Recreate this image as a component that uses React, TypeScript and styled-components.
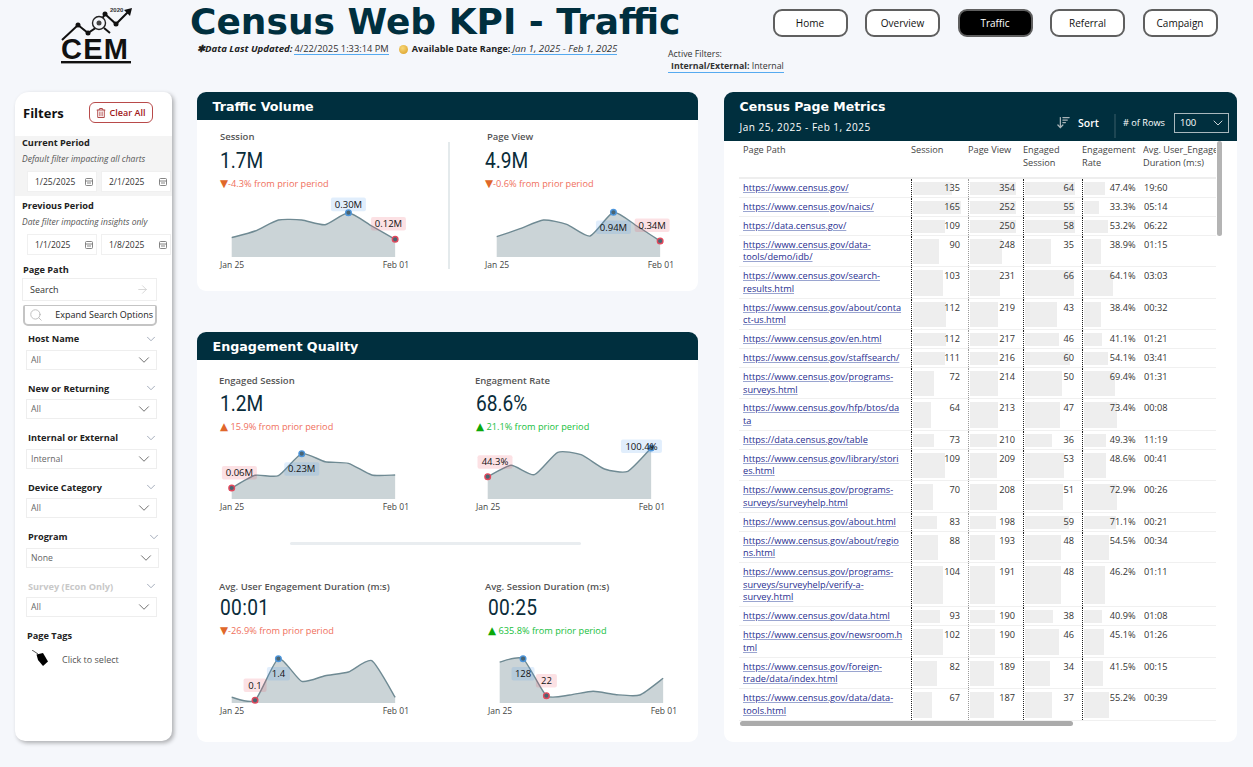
// External Imports
import styled, { createGlobalStyle } from 'styled-components'
import { ArrowDownWideNarrow, ArrowRight, ChevronDown, Search } from 'lucide-react'
import { FaRegTrashAlt } from 'react-icons/fa'

// Types

interface IChart {
  heights: number[]
  low: number
  high: number
  lowText: string
  highText: string
  lowOffset: [number, number]
  highOffset: [number, number]
}

interface IKpi {
  label: string
  value: string
  delta: string
  up?: boolean
  good?: boolean
  chart: IChart
  labelIndent?: number
  valueGap: number
  chartGap: number
  mono?: boolean
}

// Data

const sessionKpi: IKpi = {
  label: 'Session', value: '1.7M', delta: '-4.3% from prior period', valueGap: 3, chartGap: 6,
  chart: {
    heights: [19.3, 26, 37, 37, 32.3, 44.3, 31, 17.7], low: 7, high: 5,
    lowText: '0.12M', highText: '0.30M', lowOffset: [-6.7, -15.5], highOffset: [0, -8.3],
  },
}

const pageViewKpi: IKpi = {
  label: 'Page View', value: '4.9M', delta: '-0.6% from prior period', valueGap: 3, chartGap: 6, labelIndent: 2,
  chart: {
    heights: [20.3, 28.3, 37, 32.7, 21, 44.7, 31, 16], low: 7, high: 5,
    lowText: '0.34M', highText: '0.94M', lowOffset: [-8, -15.7], highOffset: [0, 15],
  },
}

const engagedKpi: IKpi = {
  label: 'Engaged Session', value: '1.2M', delta: '15.9% from prior period', up: true, valueGap: 2, chartGap: 5, labelIndent: -1,
  chart: {
    heights: [11, 23.7, 23.3, 45.3, 37.3, 35.7, 24, 24], low: 0, high: 3,
    lowText: '0.06M', highText: '0.23M', lowOffset: [7.7, -15.3], highOffset: [0, 15.3],
  },
}

const rateKpi: IKpi = {
  label: 'Engagment Rate', value: '68.6%', delta: '21.1% from prior period', up: true, good: true, valueGap: 2, chartGap: 5, labelIndent: -1,
  chart: {
    heights: [22.3, 33.7, 24.3, 46.7, 44.3, 30, 27.7, 51], low: 0, high: 7,
    lowText: '44.3%', highText: '100.4%', lowOffset: [7.3, -14.7], highOffset: [-9.7, -1.7],
  },
}

const userDurationKpi: IKpi = {
  label: 'Avg. User Engagement Duration (m:s)', value: '00:01', delta: '-26.9% from prior period', valueGap: 0, chartGap: 5, labelIndent: -1, mono: true,
  chart: {
    heights: [5.7, 2.7, 44.3, 21.7, 27.3, 31, 42.3, 5.7], low: 1, high: 2,
    lowText: '0.1', highText: '1.4', lowOffset: [0, -15], highOffset: [0, 15],
  },
}

const sessionDurationKpi: IKpi = {
  label: 'Avg. Session Duration (m:s)', value: '00:25', delta: '635.8% from prior period', up: true, good: true, valueGap: 0, chartGap: 5, labelIndent: -3, mono: true,
  chart: {
    heights: [41, 44.3, 7.3, 8, 11.7, 8.3, 8, 24.7], low: 2, high: 1,
    lowText: '22', highText: '128', lowOffset: [0, -15], highOffset: [0, 15],
  },
}

// a "|" marks where the path wraps in the column
const pages: [string, number, number, number, string, string][] = [
  ['https://www.census.gov/', 135, 354, 64, '47.4%', '19:60'],
  ['https://www.census.gov/naics/', 165, 252, 55, '33.3%', '05:14'],
  ['https://data.census.gov/', 109, 250, 58, '53.2%', '06:22'],
  ['https://www.census.gov/data-|tools/demo/idb/', 90, 248, 35, '38.9%', '01:15'],
  ['https://www.census.gov/search-|results.html', 103, 231, 66, '64.1%', '03:03'],
  ['https://www.census.gov/about/conta|ct-us.html', 112, 219, 43, '38.4%', '00:32'],
  ['https://www.census.gov/en.html', 112, 217, 46, '41.1%', '01:21'],
  ['https://www.census.gov/staffsearch/', 111, 216, 60, '54.1%', '03:41'],
  ['https://www.census.gov/programs-|surveys.html', 72, 214, 50, '69.4%', '01:31'],
  ['https://www.census.gov/hfp/btos/da|ta', 64, 213, 47, '73.4%', '00:08'],
  ['https://data.census.gov/table', 73, 210, 36, '49.3%', '11:19'],
  ['https://www.census.gov/library/stori|es.html', 109, 209, 53, '48.6%', '00:41'],
  ['https://www.census.gov/programs-|surveys/surveyhelp.html', 70, 208, 51, '72.9%', '00:26'],
  ['https://www.census.gov/about.html', 83, 198, 59, '71.1%', '00:21'],
  ['https://www.census.gov/about/regio|ns.html', 88, 193, 48, '54.5%', '00:34'],
  ['https://www.census.gov/programs-|surveys/surveyhelp/verify-a-|survey.html', 104, 191, 48, '46.2%', '01:11'],
  ['https://www.census.gov/data.html', 93, 190, 38, '40.9%', '01:08'],
  ['https://www.census.gov/newsroom.h|tml', 102, 190, 46, '45.1%', '01:26'],
  ['https://www.census.gov/foreign-|trade/data/index.html', 82, 189, 34, '41.5%', '00:15'],
  ['https://www.census.gov/data/data-|tools.html', 67, 187, 37, '55.2%', '00:39'],
]

const filters = [
  { label: 'Host Name', value: 'All' },
  { label: 'New or Returning', value: 'All' },
  { label: 'Internal or External', value: 'Internal' },
  { label: 'Device Category', value: 'All' },
  { label: 'Program', value: 'None', wide: true },
  { label: 'Survey (Econ Only)', value: 'All', muted: true },
]

const navItems = ['Home', 'Overview', 'Traffic', 'Referral', 'Campaign']

// Global

const ui = `'Open Sans', 'Noto Sans', sans-serif`
const heading = `'DejaVu Sans', Verdana, sans-serif`
const navy = '#002f3e'

const GlobalStyle = createGlobalStyle`
  html, body {
    margin: 0;
    background: #f5f7fb;
    font-family: ${ui};
    color: #222;
  }
  * { box-sizing: border-box; }
`

// Header Styles

const Page = styled.div`
  width: 1253px;
  height: 767px;
  overflow: hidden;
  background: #f5f7fb;
`

const Header = styled.header`
  display: flex;
  height: 92px;
`

const LogoBox = styled.div`
  width: 190px;
  padding: 3px 0 0 58px;
`

const TitleBlock = styled.div`
  width: 478px;
`

const Title = styled.h1`
  margin: 0;
  height: 41px;
  font: bold 36px/44px ${heading};
  color: ${navy};
  white-space: nowrap;
`

const Meta = styled.div`
  display: flex;
  align-items: center;
  margin: 1px 0 0 7px;
  line-height: 14px;
  white-space: nowrap;
`

const MetaLabel = styled.span<{ $italic?: boolean }>`
  font-weight: 700;
  font-size: ${p => (p.$italic ? 9.6 : 9.1)}px;
  font-style: ${p => (p.$italic ? 'italic' : 'normal')};
  margin-right: 2px;
`

const MetaValue = styled.span<{ $italic?: boolean }>`
  font-size: ${p => (p.$italic ? 9.7 : 9.3)}px;
  font-style: ${p => (p.$italic ? 'italic' : 'normal')};
  color: #333;
  border-bottom: 1px solid #55aaf0;
  line-height: 11px;
`

const Coin = styled.span`
  width: 9px;
  height: 9px;
  margin: 0 4px 0 10px;
  border-radius: 50%;
  background: radial-gradient(circle at 40% 35%, #f8d878, #d89a20);
`

const RightBlock = styled.div`
  flex: 1;
`

const Nav = styled.nav`
  display: flex;
  margin: 9px 0 0 104.5px;
`

const NavButton = styled.div<{ $active?: boolean }>`
  width: 75px;
  height: 28px;
  margin-right: 17.5px;
  display: flex;
  align-items: center;
  justify-content: center;
  border: 2px solid #5f5f5f;
  border-radius: 9px;
  font-size: 10px;
  background: ${p => (p.$active ? '#000' : '#fff')};
  color: ${p => (p.$active ? '#fff' : '#111')};
`

const ActiveFilters = styled.div`
  margin-top: 11px;
  font-size: 8.8px;
  line-height: 12px;
  color: #333;
`

const ActiveValue = styled.div`
  display: inline-block;
  padding: 0 0 0 3px;
  border-bottom: 1px solid #55aaf0;
  b { font-weight: 700; }
`

// Layout Styles

const Body = styled.main`
  display: flex;
  padding-left: 15px;
  height: 650px;
`

const Center = styled.div`
  width: 501px;
  margin: 0 26px 0 25px;
  display: flex;
  flex-direction: column;
  gap: 41px;
`

// Sidebar Styles

const Sidebar = styled.aside`
  position: relative;
  width: 157px;
  height: 649px;
  background: #fff;
  border-radius: 14px 8px 10px 10px;
  box-shadow: 2px 2px 4px rgba(0, 0, 0, 0.3);
`

const SideHead = styled.div`
  display: flex;
  align-items: center;
  justify-content: space-between;
  height: 44px;
  padding: 7px 19.5px 10px 8px;
`

const SideTitle = styled.div`
  font-size: 13px;
  font-weight: 700;
  color: #111;
`

const ClearButton = styled.div`
  display: flex;
  align-items: center;
  justify-content: center;
  gap: 4px;
  width: 64px;
  height: 21px;
  border: 1px solid #b84a4a;
  border-radius: 6px;
  color: #a01818;
  font-size: 9px;
  font-weight: 600;
`

const Period = styled.section<{ $shaded?: boolean }>`
  height: ${p => (p.$shaded ? 60 : 67)}px;
  padding: ${p => (p.$shaded ? 0 : 3)}px 0 0 7px;
  background: ${p => (p.$shaded ? '#f4f4f4' : 'transparent')};
`

const PeriodTitle = styled.div`
  font-size: 9.2px;
  line-height: 13px;
  font-weight: 700;
  color: #222;
`

const PeriodNote = styled.div`
  font-size: 8.5px;
  line-height: 11px;
  margin-top: 4px;
  font-style: italic;
  color: #555;
`

const DateRow = styled.div`
  display: flex;
  gap: 4px;
  margin: 7px 0 0 5px;
`

const DateBox = styled.div`
  display: flex;
  align-items: center;
  justify-content: space-between;
  width: 70px;
  height: 21px;
  padding: 0 3px 0 7px;
  border: 1px solid #f0f0f0;
  background: #fff;
  font-size: 8.5px;
  color: #333;
`

const PathLabel = styled.div`
  margin: 0 0 0 8px;
  font-size: 9.2px;
  line-height: 13px;
  font-weight: 700;
`

const SearchBox = styled.div`
  display: flex;
  align-items: center;
  justify-content: space-between;
  width: 135px;
  height: 23px;
  margin: 2px 0 0 7px;
  padding: 0 7px;
  border: 1px solid #eee;
  font-size: 9px;
  color: #333;
`

const ExpandBox = styled.div`
  display: flex;
  align-items: center;
  justify-content: space-between;
  width: 134px;
  height: 21px;
  margin: 3.5px 0 0 8px;
  padding: 0 2px 0 4px;
  border: 2px solid #c4c4c4;
  border-top-width: 1px;
  border-radius: 2px 2px 5px 5px;
  font-size: 9px;
  color: #222;
  white-space: nowrap;
`

const FilterList = styled.div`
  margin: 6px 0 0 11px;
`

const FilterGroup = styled.div`
  margin-bottom: 11.5px;
`

const FilterHead = styled.div<{ $wide?: boolean; $muted?: boolean }>`
  display: flex;
  align-items: center;
  justify-content: space-between;
  width: ${p => (p.$wide ? 133 : 130)}px;
  height: 14px;
  margin-left: 2px;
  font-size: 9.2px;
  font-weight: 700;
  color: ${p => (p.$muted ? '#c8c8c8' : '#222')};
  svg { color: #8a94a6; }
`

const FilterSelect = styled.div<{ $wide?: boolean }>`
  display: flex;
  align-items: center;
  justify-content: space-between;
  width: ${p => (p.$wide ? 133 : 131)}px;
  height: 20px;
  margin-top: 4px;
  padding: 0 3px 0 4px;
  border: 1px solid #eee;
  font-size: 8.7px;
  color: #666;
  svg { color: #555; }
`

const TagsTitle = styled(PathLabel)`
  margin: 1.5px 0 0 12px;
`

const TagsRow = styled.div`
  display: flex;
  align-items: flex-end;
  gap: 14px;
  margin: 8.5px 0 0 17px;
  font-size: 9px;
  line-height: 12px;
  color: #555;
`

// Panel Styles

const Panel = styled.section<{ $height: number }>`
  height: ${p => p.$height}px;
  background: #fff;
  border-radius: 9px;
  overflow: hidden;
`

const PanelHeader = styled.div`
  height: 27.5px;
  padding-left: 15.5px;
  background: ${navy};
  color: #fff;
  font: bold 12.7px/30px ${heading};
`

const KpiRow = styled.div<{ $second: number }>`
  display: grid;
  grid-template-columns: ${p => p.$second}px 1fr;
  padding-left: 23px;
`

const TrafficRow = styled.div`
  display: grid;
  grid-template-columns: 228px 2px 1fr;
  padding: 10px 0 0 23px;
`

const VolumeDivider = styled.div`
  width: 2px;
  height: 127px;
  margin-top: 12px;
  background: #e4eaec;
`

const TrafficSecond = styled.div`
  padding-left: 35px;
`

const QualityTop = styled.div`
  padding-top: 14px;
`

const QualityDivider = styled.div`
  width: 291px;
  height: 3px;
  margin: 29px 0 35px 93px;
  background: #e9edf0;
  border-radius: 2px;
`

const KpiLabel = styled.div<{ $indent: number }>`
  margin-left: ${p => p.$indent}px;
  font-size: 9.5px;
  line-height: 14px;
  font-weight: 600;
  color: #555;
  white-space: nowrap;
`

const KpiValue = styled.div<{ $gap: number; $mono?: boolean }>`
  margin-top: ${p => p.$gap}px;
  font-family: Roboto, sans-serif;
  font-size: 22px;
  line-height: 28px;
  letter-spacing: ${p => (p.$mono ? '0.4px' : '0')};
  transform: scaleX(0.87);
  transform-origin: left center;
  color: #0a2c3a;
`

const KpiDelta = styled.div<{ $good?: boolean }>`
  margin-top: 2px;
  height: 14px;
  font-size: 9.2px;
  line-height: 14px;
  white-space: nowrap;
  color: ${p => (p.$good ? '#17c03c' : '#ef6f5c')};
`

const DeltaMark = styled.span<{ $good?: boolean }>`
  font-family: 'DejaVu Sans', sans-serif;
  font-size: 10.5px;
  line-height: 0;
  color: ${p => (p.$good ? '#0aa80a' : '#e0672a')};
`

const Chart = styled.svg<{ $gap: number }>`
  display: block;
  margin-top: ${p => p.$gap}px;
  overflow: visible;
  text {
    font-family: ${ui};
    font-size: 9.5px;
    fill: #111;
  }
`

const AxisRow = styled.div`
  display: flex;
  justify-content: space-between;
  width: 189px;
  font-size: 8.5px;
  line-height: 12px;
  color: #444;
`

// Table Styles

const MetricsPanel = styled(Panel)`
  position: relative;
  width: 513px;
`

const MetricsHeader = styled.div`
  display: flex;
  justify-content: space-between;
  height: 49px;
  padding: 6px 8px 0 15.5px;
  background: ${navy};
  color: #fff;
`

const MetricsTitle = styled.div`
  font: bold 12.5px/17px ${heading};
`

const MetricsDate = styled.div`
  margin-top: 5px;
  font-size: 10px;
  line-height: 14px;
  font-weight: 500;
  letter-spacing: 0.5px;
`

const MetricsTools = styled.div`
  display: flex;
  align-items: center;
  height: 30px;
  margin-top: 9.5px;
`

const SortLabel = styled.div`
  display: flex;
  align-items: center;
  gap: 7px;
  font-size: 10.5px;
  font-weight: 600;
  svg { color: #a9b4b8; }
`

const ToolDivider = styled.div`
  width: 2px;
  height: 24px;
  margin: 6px 7px 0 15px;
  background: #1d4653;
`

const RowsLabel = styled.div`
  font-size: 9.2px;
  font-weight: 500;
  margin-right: 9px;
`

const RowsSelect = styled.div`
  display: flex;
  align-items: center;
  justify-content: space-between;
  width: 55px;
  height: 20px;
  padding: 0 2px 0 5px;
  border: 1px solid #a9b8bd;
  font-size: 9.5px;
`

const TableWrap = styled.div`
  margin-left: 15px;
  width: 477px;
  overflow: hidden;
`

const Table = styled.table`
  width: 477px;
  border-collapse: collapse;
  table-layout: fixed;
  font-size: 9.2px;
  color: #333;
`

const Heading = styled.th`
  height: 37px;
  padding: 2px 0 0 0;
  text-align: left;
  vertical-align: top;
  font-weight: 400;
  font-size: 9.2px;
  line-height: 13px;
  color: #444;
  white-space: nowrap;
  overflow: hidden;
  border-bottom: 2px solid #eee;
  &:first-child { padding-left: 4px; }
`

const Row = styled.tr`
  border-bottom: 1px solid #f0f0f0;
`

const PathCell = styled.td`
  padding: 3px 0 2.3px 4px;
  line-height: 12.6px;
  vertical-align: top;
  white-space: nowrap;
`

const PathLink = styled.a`
  color: #1f2d8f;
  text-decoration: underline;
  text-decoration-color: #9aa5d0;
`

const BarCell = styled.td<{ $dark?: boolean }>`
  position: relative;
  padding: 3px 7.5px 2.3px 0;
  line-height: 12.6px;
  vertical-align: top;
  text-align: right;
  border-left: 1px dotted ${p => (p.$dark ? '#222' : '#999')};
`

const Bar = styled.span`
  position: absolute;
  left: 1px;
  top: 3px;
  bottom: 2px;
  background: #eeeeee;
`

const CellText = styled.span`
  position: relative;
`

const DurationCell = styled.td`
  padding: 3px 0 2.3px 1px;
  line-height: 12.6px;
  vertical-align: top;
`

const ScrollY = styled.div`
  position: absolute;
  left: 493px;
  top: 49px;
  width: 5px;
  height: 95px;
  border-radius: 3px;
  background: #b4b4b4;
`

const ScrollX = styled.div`
  position: absolute;
  left: 16px;
  top: 629px;
  width: 333px;
  height: 5px;
  border-radius: 3px;
  background: #ababab;
`

// Drawings

const Logo = () => (
  <svg width="76" height="66" viewBox="0 0 76 66">
    <text x="52" y="9" fontFamily="Liberation Sans" fontWeight="700" fontSize="6" fill="#333">
      2020
    </text>
    <polyline points="4,37 20,22 30,30 39,24 47,11 58,21 72,7" fill="none" stroke="#111" strokeWidth="2" />
    <polygon points="74,5 66,7 72,13" fill="#111" />
    <circle cx="20" cy="22" r="2.5" fill="#111" />
    <circle cx="30" cy="30" r="2.5" fill="#111" />
    <circle cx="47" cy="11" r="2.5" fill="#111" />
    <circle cx="58" cy="21" r="2.5" fill="#111" />
    <circle cx="41" cy="20" r="6.5" fill="#f5f7fb" stroke="#222" strokeWidth="1.4" />
    <circle cx="41" cy="20" r="2.5" fill="#444" />
    <line x1="46" y1="25" x2="52" y2="30" stroke="#111" strokeWidth="2" />
    <text x="3" y="56" fontFamily="Liberation Sans" fontWeight="700" fontSize="29" textLength="67" fill="#111">
      CEM
    </text>
    <rect x="3" y="58" width="70" height="2.4" fill="#111" />
  </svg>
)

const CalendarGlyph = () => (
  <svg width="8" height="8" viewBox="0 0 8 8" fill="none" stroke="#777" strokeWidth="0.9">
    <rect x="0.5" y="0.5" width="7" height="7" rx="1" />
    <line x1="0.5" y1="3" x2="7.5" y2="3" />
    <line x1="2" y1="5" x2="6" y2="5" />
  </svg>
)

const TagGlyph = () => (
  <svg width="16" height="16" viewBox="0 0 16 16">
    <line x1="0" y1="0" x2="6" y2="4" stroke="#555" strokeWidth="1" />
    <polygon points="4.5,4.5 11,3 16,11.5 11,16 6,10" fill="#000" />
  </svg>
)

// Components

const STEP = 23.35
const INSET = 11.7
const BASE = 60

const Spark = ({ chart, gap }: { chart: IChart; gap: number }) => {
  const pts = chart.heights.map((h, i) => [INSET + i * STEP, BASE - h])
  let line = `M${pts[0][0]} ${pts[0][1]}`
  for (let i = 0; i < pts.length - 1; i++) {
    const a = pts[Math.max(i - 1, 0)]
    const b = pts[i]
    const c = pts[i + 1]
    const d = pts[Math.min(i + 2, pts.length - 1)]
    const t = 0.1
    line += ` C${b[0] + (c[0] - a[0]) * t} ${b[1] + (c[1] - a[1]) * t} ${c[0] - (d[0] - b[0]) * t} ${c[1] - (d[1] - b[1]) * t} ${c[0]} ${c[1]}`
  }
  const area = `${line} L${pts[7][0]} ${BASE} L${pts[0][0]} ${BASE} Z`
  const marks = [
    { at: pts[chart.low], off: chart.lowOffset, text: chart.lowText, fill: 'rgba(240,80,95,0.17)', ring: '#e2485c' },
    { at: pts[chart.high], off: chart.highOffset, text: chart.highText, fill: 'rgba(70,150,235,0.16)', ring: '#4d96dc' },
  ]
  return (
    <Chart $gap={gap} width="189" height="62" viewBox="0 0 189 62">
      <path d={area} fill="#cbd4d7" />
      <path d={line} fill="none" stroke="#6f8a93" strokeWidth="1.4" />
      {marks.map(m => {
        const w = Math.max(21, m.text.length * 6 + 5)
        const cx = m.at[0] + m.off[0]
        const cy = m.at[1] + m.off[1]
        return (
          <g key={m.text}>
            <rect x={cx - w / 2} y={cy - 6.8} width={w} height={13.6} rx="2" fill={m.fill} />
            <circle cx={m.at[0]} cy={m.at[1]} r="2.8" fill="#4a6472" stroke={m.ring} strokeWidth="1.4" />
            <text x={cx} y={cy + 3.3} textAnchor="middle">
              {m.text}
            </text>
          </g>
        )
      })}
    </Chart>
  )
}

const KpiCard = ({ kpi }: { kpi: IKpi }) => (
  <div>
    <KpiLabel $indent={kpi.labelIndent ?? 0}>{kpi.label}</KpiLabel>
    <KpiValue $gap={kpi.valueGap} $mono={kpi.mono}>
      {kpi.value}
    </KpiValue>
    <KpiDelta $good={kpi.good}>
      <DeltaMark $good={kpi.good}>{kpi.up ? '▲' : '▼'}</DeltaMark>
      {kpi.up ? ' ' : ''}
      {kpi.delta}
    </KpiDelta>
    <Spark chart={kpi.chart} gap={kpi.chartGap} />
    <AxisRow>
      <span>Jan 25</span>
      <span>Feb 01</span>
    </AxisRow>
  </div>
)

const DateField = ({ value }: { value: string }) => (
  <DateBox>
    {value}
    <CalendarGlyph />
  </DateBox>
)

const FilterBar = () => (
  <Sidebar>
    <SideHead>
      <SideTitle>Filters</SideTitle>
      <ClearButton>
        <FaRegTrashAlt size={10} color="#b04848" />
        Clear All
      </ClearButton>
    </SideHead>
    <Period $shaded>
      <PeriodTitle>Current Period</PeriodTitle>
      <PeriodNote>Default filter impacting all charts</PeriodNote>
      <DateRow>
        <DateField value="1/25/2025" />
        <DateField value="2/1/2025" />
      </DateRow>
    </Period>
    <Period>
      <PeriodTitle>Previous Period</PeriodTitle>
      <PeriodNote>Date filter impacting insights only</PeriodNote>
      <DateRow>
        <DateField value="1/1/2025" />
        <DateField value="1/8/2025" />
      </DateRow>
    </Period>
    <PathLabel>Page Path</PathLabel>
    <SearchBox>
      Search
      <ArrowRight size={13} color="#cfcfcf" strokeWidth={1.5} />
    </SearchBox>
    <ExpandBox>
      <Search size={14} color="#b8b8b8" strokeWidth={1.5} />
      Expand Search Options
    </ExpandBox>
    <FilterList>
      {filters.map(f => (
        <FilterGroup key={f.label}>
          <FilterHead $wide={f.wide} $muted={f.muted}>
            {f.label}
            <ChevronDown size={14} strokeWidth={1.3} />
          </FilterHead>
          <FilterSelect $wide={f.wide}>
            {f.value}
            <ChevronDown size={18} strokeWidth={1.1} />
          </FilterSelect>
        </FilterGroup>
      ))}
    </FilterList>
    <TagsTitle>Page Tags</TagsTitle>
    <TagsRow>
      <TagGlyph />
      Click to select
    </TagsRow>
  </Sidebar>
)

const MetricsTable = () => (
  <TableWrap>
    <Table>
      <colgroup>
        <col width="172" />
        <col width="57" />
        <col width="55" />
        <col width="59" />
        <col width="61" />
        <col width="73" />
      </colgroup>
      <thead>
        <tr>
          <Heading>Page Path</Heading>
          <Heading>Session</Heading>
          <Heading>Page View</Heading>
          <Heading>
            Engaged
            <br />
            Session
          </Heading>
          <Heading>
            Engagement
            <br />
            Rate
          </Heading>
          <Heading>
            Avg. User_Engagement
            <br />
            Duration (m:s)
          </Heading>
        </tr>
      </thead>
      <tbody>
        {pages.map(([path, session, views, engaged, rate, duration], i) => (
          <Row key={path}>
            <PathCell>
              <PathLink>
                {path.split('|').map((part, j) => (
                  <span key={part}>
                    {j > 0 && <br />}
                    {part}
                  </span>
                ))}
              </PathLink>
            </PathCell>
            <BarCell $dark>
              <Bar style={{ width: session * 0.295 }} />
              <CellText>{session}</CellText>
            </BarCell>
            <BarCell>
              <Bar style={{ width: i < 3 ? 46.5 : views * 0.132 }} />
              <CellText>{views}</CellText>
            </BarCell>
            <BarCell $dark>
              <Bar style={{ width: i < 3 ? 50 : engaged * 0.75 }} />
              <CellText>{engaged}</CellText>
            </BarCell>
            <BarCell $dark>
              <Bar style={{ width: parseFloat(rate) * 0.46 }} />
              <CellText>{rate}</CellText>
            </BarCell>
            <DurationCell>{duration}</DurationCell>
          </Row>
        ))}
      </tbody>
    </Table>
  </TableWrap>
)

export default function App() {
  return (
    <Page>
      <GlobalStyle />
      <Header>
        <LogoBox>
          <Logo />
        </LogoBox>
        <TitleBlock>
          <Title>Census Web KPI - Traffic</Title>
          <Meta>
            <MetaLabel $italic>✱Data Last Updated:</MetaLabel>
            <MetaValue>4/22/2025 1:33:14 PM</MetaValue>
            <Coin />
            <MetaLabel>Available Date Range:</MetaLabel>
            <MetaValue $italic>Jan 1, 2025 - Feb 1, 2025</MetaValue>
          </Meta>
        </TitleBlock>
        <RightBlock>
          <Nav>
            {navItems.map(item => (
              <NavButton key={item} $active={item === 'Traffic'}>
                {item}
              </NavButton>
            ))}
          </Nav>
          <ActiveFilters>
            Active Filters:
            <br />
            <ActiveValue>
              <b>Internal/External:</b> Internal
            </ActiveValue>
          </ActiveFilters>
        </RightBlock>
      </Header>
      <Body>
        <FilterBar />
        <Center>
          <Panel $height={199}>
            <PanelHeader>Traffic Volume</PanelHeader>
            <TrafficRow>
              <KpiCard kpi={sessionKpi} />
              <VolumeDivider />
              <TrafficSecond>
                <KpiCard kpi={pageViewKpi} />
              </TrafficSecond>
            </TrafficRow>
          </Panel>
          <Panel $height={410}>
            <PanelHeader>Engagement Quality</PanelHeader>
            <QualityTop>
              <KpiRow $second={256}>
                <KpiCard kpi={engagedKpi} />
                <KpiCard kpi={rateKpi} />
              </KpiRow>
            </QualityTop>
            <QualityDivider />
            <KpiRow $second={268}>
              <KpiCard kpi={userDurationKpi} />
              <KpiCard kpi={sessionDurationKpi} />
            </KpiRow>
          </Panel>
        </Center>
        <MetricsPanel $height={650}>
          <MetricsHeader>
            <div>
              <MetricsTitle>Census Page Metrics</MetricsTitle>
              <MetricsDate>Jan 25, 2025 - Feb 1, 2025</MetricsDate>
            </div>
            <MetricsTools>
              <SortLabel>
                <ArrowDownWideNarrow size={15} />
                Sort
              </SortLabel>
              <ToolDivider />
              <RowsLabel># of Rows</RowsLabel>
              <RowsSelect>
                100
                <ChevronDown size={16} strokeWidth={1.2} />
              </RowsSelect>
            </MetricsTools>
          </MetricsHeader>
          <MetricsTable />
          <ScrollY />
          <ScrollX />
        </MetricsPanel>
      </Body>
    </Page>
  )
}
